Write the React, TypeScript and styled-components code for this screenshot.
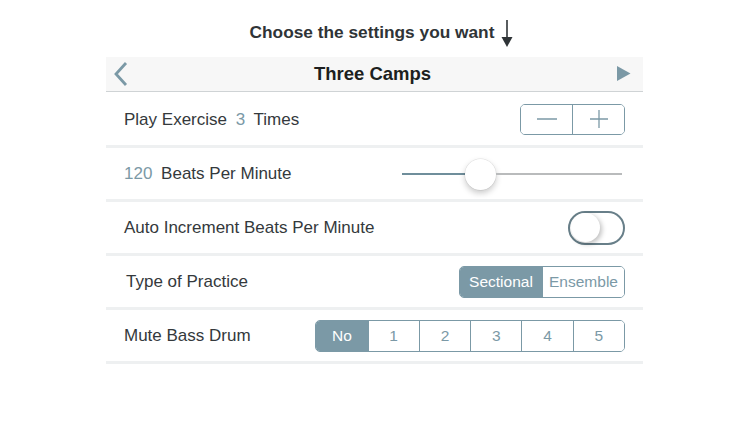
import styled, { createGlobalStyle, css } from 'styled-components';
import { useState } from 'react';

const accent = '#7b99a6';

const GlobalStyle = createGlobalStyle`
  body {
    margin: 0;
    background: #ffffff;
    font-family: 'Liberation Sans', Arial, sans-serif;
  }
`;

export default function App() {
  const [times, setTimes] = useState(3);
  const [practice, setPractice] = useState('Sectional');
  const [mute, setMute] = useState('No');
  const [auto, setAuto] = useState(false);

  return (
    <>
      <GlobalStyle />
      <StyledPage>
        <StyledHint>
          Choose the settings you want
          <svg width='14' height='28' viewBox='0 0 14 28'>
            <line x1='7' y1='0' x2='7' y2='20' stroke='#2f3437' strokeWidth='1.6' />
            <polygon points='1.5,17 12.5,17 7,27' fill='#2f3437' />
          </svg>
        </StyledHint>

        <StyledPanel>
          {/* Title bar */}
          <StyledTitleBar>
            <StyledNavButton aria-label='back'>
              <svg width='16' height='26' viewBox='0 0 16 26'>
                <polyline
                  points='13,2 3,13 13,24'
                  fill='none'
                  stroke={accent}
                  strokeWidth='2.8'
                />
              </svg>
            </StyledNavButton>
            <StyledTitle>Three Camps</StyledTitle>
            <StyledNavButton aria-label='play'>
              <svg width='14' height='16' viewBox='0 0 14 16'>
                <polygon points='0,0 13.5,7.5 0,15' fill={accent} />
              </svg>
            </StyledNavButton>
          </StyledTitleBar>

          {/* Repetitions */}
          <StyledRow>
            <StyledLabel>
              Play Exercise <StyledValue>{times}</StyledValue> Times
            </StyledLabel>
            <StyledStepper>
              <StyledStepButton onClick={() => setTimes(Math.max(1, times - 1))}>
                <svg width='20' height='20' viewBox='0 0 20 20'>
                  <line x1='0' y1='10' x2='20' y2='10' stroke={accent} strokeWidth='1.3' />
                </svg>
              </StyledStepButton>
              <StyledStepButton onClick={() => setTimes(times + 1)}>
                <svg width='20' height='20' viewBox='0 0 20 20'>
                  <line x1='1' y1='10' x2='19' y2='10' stroke={accent} strokeWidth='1.3' />
                  <line x1='10' y1='1' x2='10' y2='19' stroke={accent} strokeWidth='1.3' />
                </svg>
              </StyledStepButton>
            </StyledStepper>
          </StyledRow>

          {/* Tempo */}
          <StyledRow>
            <StyledLabel>
              <StyledValue $lead>120</StyledValue> Beats Per Minute
            </StyledLabel>
            <StyledSlider>
              <StyledTrack style={{ width: '63px' }} $filled />
              <StyledThumb />
              <StyledTrack />
            </StyledSlider>
          </StyledRow>

          {/* Auto increment */}
          <StyledRow>
            <StyledLabel>Auto Increment Beats Per Minute</StyledLabel>
            <StyledSwitch $on={auto} onClick={() => setAuto(!auto)}>
              <StyledKnob />
            </StyledSwitch>
          </StyledRow>

          {/* Practice type */}
          <StyledRow>
            <StyledLabel $nudge>Type of Practice</StyledLabel>
            <StyledSegmented>
              {['Sectional', 'Ensemble'].map((option) => (
                <StyledSegment
                  key={option}
                  $active={practice === option}
                  $width={82}
                  onClick={() => setPractice(option)}
                >
                  {option}
                </StyledSegment>
              ))}
            </StyledSegmented>
          </StyledRow>

          {/* Bass drum */}
          <StyledRow>
            <StyledLabel>Mute Bass Drum</StyledLabel>
            <StyledSegmented>
              {['No', '1', '2', '3', '4', '5'].map((option) => (
                <StyledSegment
                  key={option}
                  $active={mute === option}
                  $width={51.3}
                  onClick={() => setMute(option)}
                >
                  {option}
                </StyledSegment>
              ))}
            </StyledSegmented>
          </StyledRow>
        </StyledPanel>
      </StyledPage>
    </>
  );
}

const StyledPage = styled.div`
  width: 750px;
  height: 422px;
  display: flex;
  flex-direction: column;
  align-items: center;
`;

const StyledHint = styled.h1`
  margin: 20px 0 9px;
  height: 28px;
  display: flex;
  align-items: flex-start;
  gap: 6px;
  padding-left: 14px;
  font-size: 17.3px;
  font-weight: 700;
  line-height: 24px;
  color: #2f3437;
`;

const StyledPanel = styled.div`
  width: 537px;
  margin-left: -1px;
  display: flex;
  flex-direction: column;
`;

const StyledTitleBar = styled.div`
  height: 34px;
  margin-bottom: 2px;
  display: flex;
  align-items: center;
  justify-content: space-between;
  padding: 0 8px 0 4px;
  background: #f7f7f7;
  border-bottom: 1px solid #cfd3d5;
`;

const StyledNavButton = styled.button`
  display: flex;
  align-items: center;
  justify-content: center;
  width: 22px;
  height: 28px;
  padding: 0;
  border: none;
  background: none;
`;

const StyledTitle = styled.div`
  font-size: 18.5px;
  font-weight: 700;
  color: #1d1f20;
`;

const StyledRow = styled.div`
  height: 51px;
  display: flex;
  align-items: center;
  justify-content: space-between;
  padding: 0 18px;
  border-bottom: 3px solid #eef0f1;
`;

const StyledLabel = styled.div`
  font-size: 17px;
  color: #34393c;
  ${({ $nudge }) =>
    $nudge &&
    css`
      margin-left: 2px;
    `}
`;

const StyledValue = styled.span`
  color: ${accent};
  margin: 0 4px;
  ${({ $lead }) =>
    $lead &&
    css`
      margin: 0 4px 0 0;
    `}
`;

const StyledStepper = styled.div`
  display: flex;
  width: 105px;
  height: 31px;
  margin-top: -1px;
  border: 1px solid ${accent};
  border-radius: 5px;
  box-sizing: border-box;
  overflow: hidden;
`;

const StyledStepButton = styled.button`
  flex: 1;
  display: flex;
  align-items: center;
  justify-content: center;
  padding: 0;
  border: none;
  background: #ffffff;
  & + & {
    border-left: 1px solid ${accent};
  }
`;

const StyledSlider = styled.div`
  width: 220px;
  margin-right: 3px;
  display: flex;
  align-items: center;
`;

const StyledTrack = styled.div`
  height: 2px;
  flex: 1;
  background: #b9bbbc;
  ${({ $filled }) =>
    $filled &&
    css`
      flex: none;
      background: #6f8e9b;
    `}
`;

const StyledThumb = styled.div`
  width: 31px;
  height: 31px;
  flex: none;
  margin: 1px 0 0;
  border-radius: 50%;
  background: #ffffff;
  box-shadow: 0 3px 6px rgba(0, 0, 0, 0.22), 0 0 0 0.5px rgba(0, 0, 0, 0.1);
`;

const StyledSwitch = styled.button`
  width: 57px;
  height: 34px;
  padding: 0 0 0 1px;
  box-sizing: border-box;
  border: 2px solid #687f89;
  border-radius: 17px;
  background: #ffffff;
  display: flex;
  align-items: center;
  justify-content: ${({ $on }) => ($on ? 'flex-end' : 'flex-start')};
`;

const StyledKnob = styled.div`
  width: 29px;
  height: 29px;
  border-radius: 50%;
  background: #ffffff;
  box-shadow: 2px 2px 5px rgba(0, 0, 0, 0.25);
`;

const StyledSegmented = styled.div`
  display: flex;
  height: 32px;
  border: 1px solid ${accent};
  border-radius: 5px;
  box-sizing: border-box;
  overflow: hidden;
`;

const StyledSegment = styled.button`
  width: ${({ $width }) => $width}px;
  padding: 0;
  border: none;
  font-family: 'Liberation Sans', Arial, sans-serif;
  font-size: 15.5px;
  color: ${accent};
  background: #ffffff;
  & + & {
    border-left: 1px solid ${accent};
  }
  ${({ $active }) =>
    $active &&
    css`
      color: #ffffff;
      background: ${accent};
    `}
`;
